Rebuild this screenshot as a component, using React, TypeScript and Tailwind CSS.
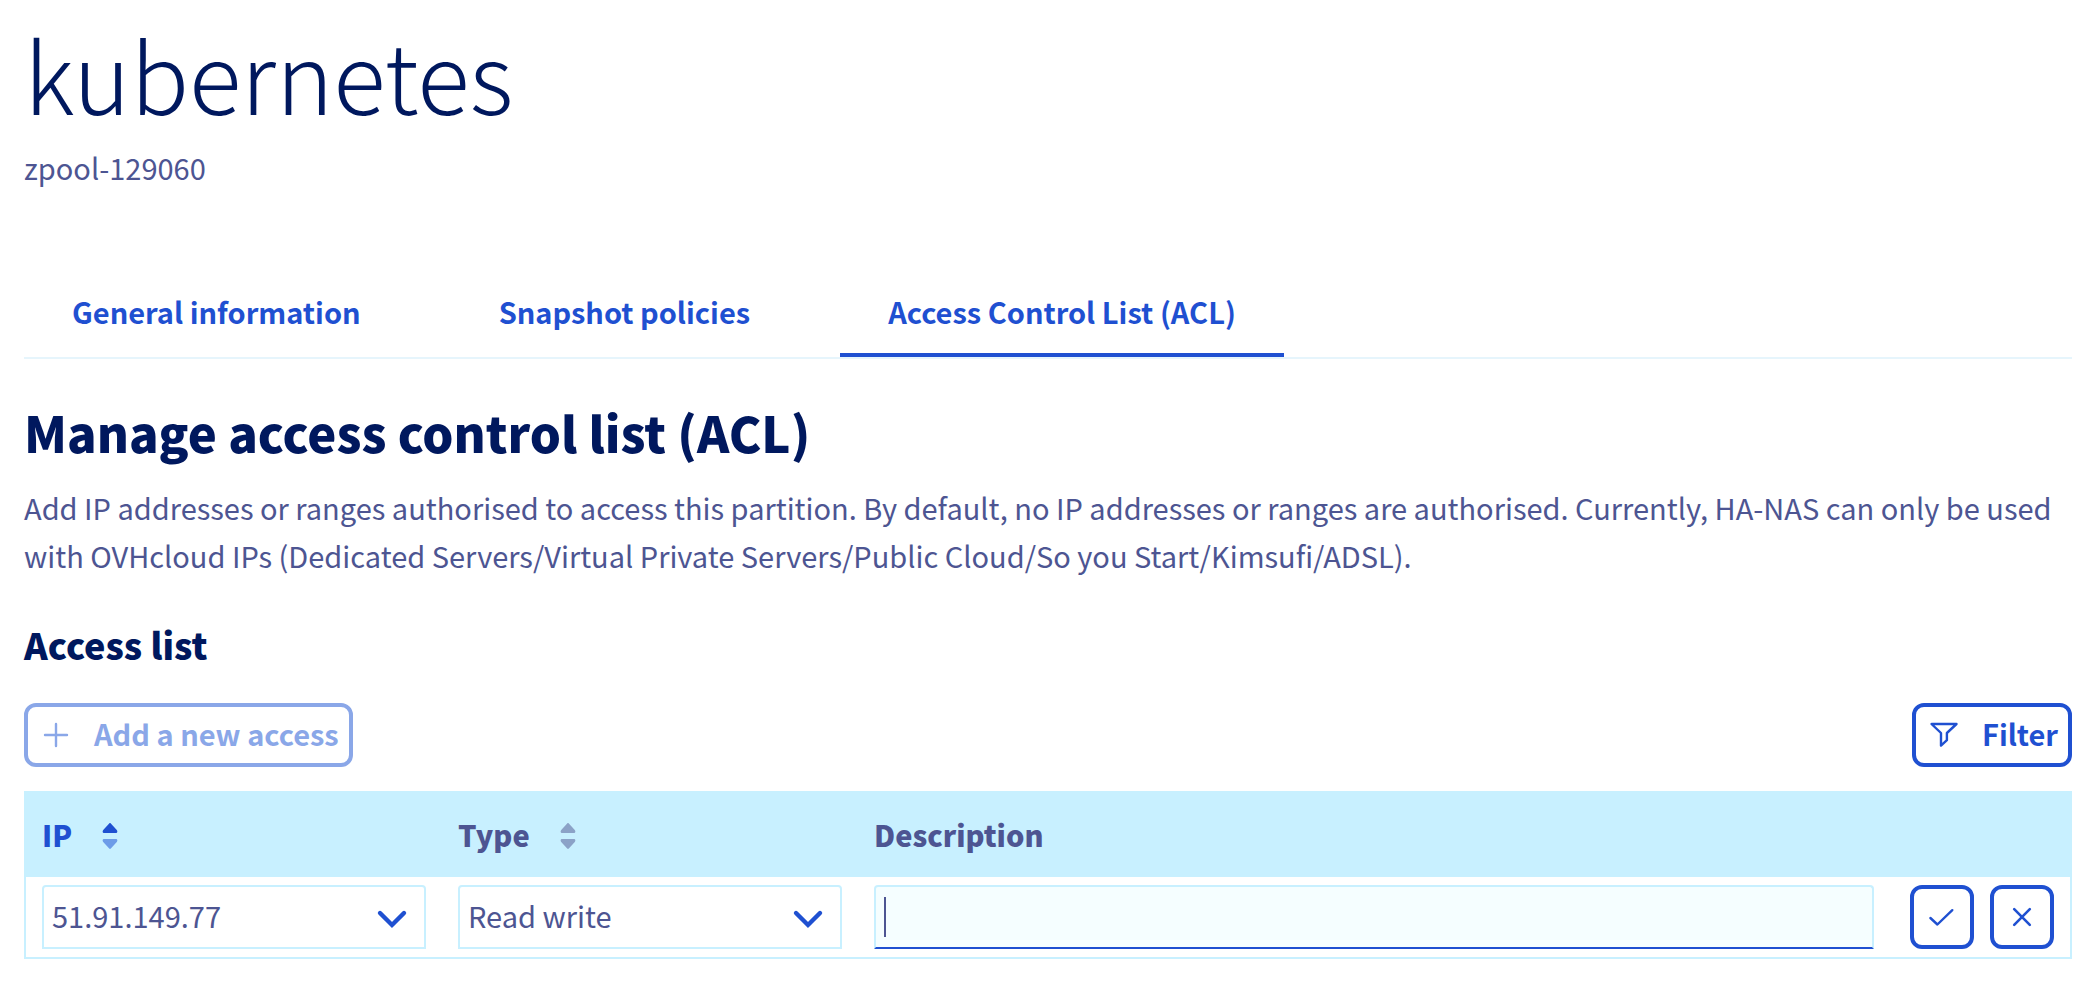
import { useState } from "react";

const tabs = ["General information", "Snapshot policies", "Access Control List (ACL)"];

function PlusIcon() {
  return (
    <svg className="size-8 shrink-0" viewBox="0 0 32 32" fill="none" stroke="currentColor" strokeWidth="2.4" strokeLinecap="round" aria-hidden="true">
      <path d="M16 5v22M5 16h22" />
    </svg>
  );
}

function FunnelIcon() {
  return (
    <svg className="size-8 shrink-0" viewBox="0 0 32 32" fill="none" stroke="currentColor" strokeWidth="2.4" strokeLinecap="round" strokeLinejoin="round" aria-hidden="true">
      <path d="M3.5 5h25L18.9 14v7.2L13 26.6V14z" />
    </svg>
  );
}

function CheckIcon() {
  return (
    <svg className="size-8" viewBox="0 0 32 32" fill="none" stroke="currentColor" strokeWidth="2.4" strokeLinecap="round" strokeLinejoin="round" aria-hidden="true">
      <path d="M4.4 17l7 6.5L26.3 9.2" />
    </svg>
  );
}

function CrossIcon() {
  return (
    <svg className="size-8" viewBox="0 0 32 32" fill="none" stroke="currentColor" strokeWidth="2.6" strokeLinecap="round" aria-hidden="true">
      <path d="M8.2 8.2l15.6 15.6M23.8 8.2L8.2 23.8" />
    </svg>
  );
}

function SortIcon({ active = false }: { active?: boolean }) {
  return (
    <svg className="mt-1 h-7 w-4" viewBox="0 0 16 28" aria-hidden="true">
      <path className={active ? "fill-[#1f50d1]" : "fill-[#8ba2c7]"} d="M7.2 1.4 1.2 8C.2 9.4.6 11 1.8 11h12.4c1.2 0 1.6-1.6.6-3L8.8 1.4c-.5-.5-1.1-.5-1.6 0z" />
      <path className={active ? "fill-[#6d9ce8]" : "fill-[#8ba2c7]"} d="M7.2 26.6 1.2 20C.2 18.6.6 17 1.8 17h12.4c1.2 0 1.6 1.6.6 3l-6 6.6c-.5.5-1.1.5-1.6 0z" />
    </svg>
  );
}

function Select({ label, options }: { label: string; options: string[] }) {
  return (
    <div className="relative">
      <select
        aria-label={label}
        className="block h-16 w-full appearance-none rounded-t-[4px] border-2 border-[#c8f0ff] bg-white pr-14 pb-1 pl-2 text-[29px] leading-[48px] text-[#4d5592] outline-none"
      >
        {options.map((o) => (
          <option key={o}>{o}</option>
        ))}
      </select>
      <svg className="pointer-events-none absolute top-6 right-[18px] h-5 w-8 text-[#1f50d1]" viewBox="0 0 32 20" fill="none" stroke="currentColor" strokeWidth="4.4" strokeLinecap="round" aria-hidden="true">
        <path d="M4 4l12 12L28 4" />
      </svg>
    </div>
  );
}

export default function App() {
  const [active, setActive] = useState(2);
  const [description, setDescription] = useState("");
  return (
    <main className="bg-white px-6 pt-6 pb-12 font-['Noto_Sans_CJK_SC',sans-serif] text-[29px] leading-[48px] text-[#4d5592]">
      <header>
        <h1 className="text-[97px] leading-[98px] font-light text-[#00185e]">kubernetes</h1>
        <p className="mt-[21px]">zpool-129060</p>
      </header>

      <nav className="mt-[81px] flex gap-[42px] border-b-2 border-[#e6f5fc]">
        {tabs.map((t, i) => (
          <button
            key={t}
            type="button"
            onClick={() => setActive(i)}
            className={
              "border-b-4 px-12 pt-[15px] pb-[18px] font-bold text-[#1f50d1] " +
              (i === active ? "border-[#1f50d1]" : "border-transparent")
            }
          >
            {t}
          </button>
        ))}
      </nav>

      <h2 className="mt-10 text-[49px] leading-[66px] font-black text-[#00185e]">Manage access control list (ACL)</h2>
      <p className="mt-[18px]">
        Add IP addresses or ranges authorised to access this partition. By default, no IP addresses or ranges are
        authorised. Currently, HA-NAS can only be used with OVHcloud IPs (Dedicated Servers/Virtual Private
        Servers/Public Cloud/So you Start/Kimsufi/ADSL).
      </p>

      <h3 className="mt-10 text-[36px] leading-[50px] font-black text-[#00185e]">Access list</h3>

      <div className="mt-[34px] flex justify-between">
        <button type="button" disabled className="flex h-16 items-center gap-[22px] rounded-xl border-4 border-[#8aa7e8] pr-2.5 pl-3 font-bold text-[#8aa7e8]">
          <PlusIcon />
          <span className="pb-1">Add a new access</span>
        </button>
        <button type="button" className="flex h-16 items-center gap-[22px] rounded-xl border-4 border-[#1f50d1] pr-2.5 pl-3 font-bold text-[#1f50d1]">
          <FunnelIcon />
          <span className="pb-1">Filter</span>
        </button>
      </div>

      <div className="mt-6 border-2 border-[#c8f0ff]">
        <table className="w-full table-fixed">
          <colgroup>
            <col className="w-[416px]" />
            <col className="w-[416px]" />
            <col />
            <col className="w-[180px]" />
          </colgroup>
          <thead className="bg-[#c8f0ff] text-left">
            <tr className="h-[84px]">
              <th className="px-4 pb-0.5 font-black text-[#1f50d1]">
                <button type="button" className="flex items-center gap-[30px]">
                  IP <SortIcon active />
                </button>
              </th>
              <th className="px-4 pb-0.5 font-black">
                <button type="button" className="flex items-center gap-[30px]">
                  Type <SortIcon />
                </button>
              </th>
              <th className="px-4 pb-0.5 font-black">Description</th>
              <th aria-label="Actions" />
            </tr>
          </thead>
          <tbody>
            <tr>
              <td className="px-4 py-2">
                <Select label="IP" options={["51.91.149.77"]} />
              </td>
              <td className="px-4 py-2">
                <Select label="Type" options={["Read write", "Read only"]} />
              </td>
              <td className="px-4 py-2">
                <div className="relative">
                  <input
                    type="text"
                    aria-label="Description"
                    value={description}
                    onChange={(e) => setDescription(e.target.value)}
                    className="peer block h-16 w-full rounded-t-[4px] border-2 border-[#c8f0ff] border-b-[#1f50d1] bg-[#f5feff] px-2 outline-none"
                  />
                  <span className="pointer-events-none absolute top-3 left-[10px] h-10 w-0.5 bg-[#4d5592] peer-focus:hidden" />
                </div>
              </td>
              <td className="px-4 py-2">
                <div className="flex justify-end gap-4 text-[#1f50d1]">
                  <button type="button" aria-label="Confirm" className="flex size-16 items-center justify-center rounded-xl border-4 border-[#1f50d1]">
                    <CheckIcon />
                  </button>
                  <button type="button" aria-label="Cancel" className="flex size-16 items-center justify-center rounded-xl border-4 border-[#1f50d1]">
                    <CrossIcon />
                  </button>
                </div>
              </td>
            </tr>
          </tbody>
        </table>
      </div>
    </main>
  );
}
